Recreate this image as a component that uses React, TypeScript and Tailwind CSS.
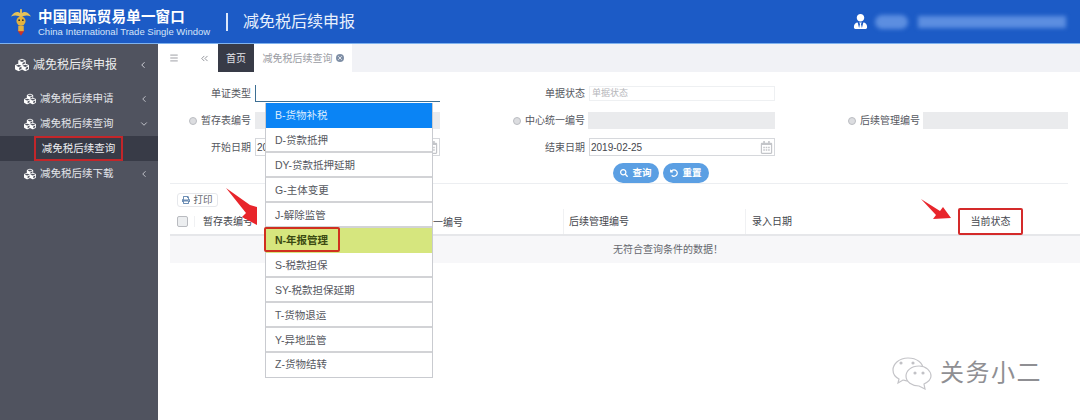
import { FaCubes, FaUserTie, FaSearch, FaPrint, FaRegCalendarAlt, FaUndoAlt } from "react-icons/fa";
import { ChevronDown, ChevronLeft, ChevronsLeft, Menu, X } from "lucide-react";

const font = { fontFamily: '"Liberation Sans", "Noto Sans CJK SC", sans-serif' };

const options = [
  "B-货物补税",
  "D-贷款抵押",
  "DY-贷款抵押延期",
  "G-主体变更",
  "J-解除监管",
  "N-年报管理",
  "S-税款担保",
  "SY-税款担保延期",
  "T-货物退运",
  "Y-异地监管",
  "Z-货物结转",
];

function Logo() {
  return (
    <svg width="22" height="30" viewBox="0 0 24 30" className="shrink-0">
      <path d="M1 9 C5 3 9 3 12 6 C15 3 19 3 23 9 C18 7 15 8 12 10 C9 8 6 7 1 9Z" fill="#e6c25a" />
      <rect x="11" y="1" width="2" height="8" fill="#e6c25a" />
      <circle cx="12" cy="14" r="5" fill="#e3b23f" />
      <path d="M4 18 L12 30 L20 18 L16 24 L8 24Z" fill="#c8322d" />
      <rect x="9" y="19" width="6" height="6" fill="#e3b23f" />
      <circle cx="10" cy="13" r="1" fill="#333" />
      <circle cx="14" cy="13" r="1" fill="#333" />
    </svg>
  );
}

function Header() {
  return (
    <header className="flex h-[44px] items-center border-b border-[#7fb2ee] bg-[#1c5bc6] pl-[10px] text-white">
      <Logo />
      <div className="ml-[6px] w-[175px] whitespace-nowrap pt-[3px]">
        <div className="text-[14.5px] font-bold leading-[17px] tracking-[0.2px]">中国国际贸易单一窗口</div>
        <div className="text-[9.5px] leading-[12px] text-[#d5e3f8]">China International Trade Single Window</div>
      </div>
      <div className="ml-[13px] h-[18px] w-[2px] bg-[#dbe7fa]" />
      <div className="ml-[15px] whitespace-nowrap text-[16px] text-[#e8f0fc]">减免税后续申报</div>
      <FaUserTie className="ml-[498px] shrink-0 text-[15px] text-white" />
      <div className="ml-[7px] flex items-center gap-[10px] blur-[2px]">
        <div className="h-[14px] w-[33px] rounded-full bg-[#5c8ee0]" />
        <div className="h-[12px] w-[148px] bg-[#5c8ee0]" />
      </div>
    </header>
  );
}

function NavItem({ label, open }: { label: string; open?: boolean }) {
  return (
    <div className="flex h-[25px] items-center pl-[24px] pr-[9px] text-[10.5px] text-[#e4e5ea]">
      <FaCubes className="mr-[4px] text-[12px] text-white" />
      <span>{label}</span>
      {open ? (
        <ChevronDown size={10} className="ml-auto text-[#d5d6dc]" />
      ) : (
        <ChevronLeft size={10} className="ml-auto text-[#d5d6dc]" />
      )}
    </div>
  );
}

function Sidebar() {
  return (
    <aside className="h-[376px] w-[158px] shrink-0 bg-[#50535f]">
      <div className="flex h-[42px] items-center pl-[15px] pr-[10px] text-[12px] text-[#eceded]">
        <FaCubes className="mr-[4px] text-[14px] text-white" />
        <span>减免税后续申报</span>
        <ChevronLeft size={10} className="ml-auto text-[#e4e5ea]" />
      </div>
      <NavItem label="减免税后续申请" />
      <NavItem label="减免税后续查询" open />
      <div className="flex h-[25px] items-center bg-[#383b47] pl-[34px]">
        <div className="flex h-[25px] w-[89px] items-center justify-center border-2 border-[#c2262a] text-[10.5px] text-[#eeeff2]">
          减免税后续查询
        </div>
      </div>
      <NavItem label="减免税后续下载" />
    </aside>
  );
}

function TabBar() {
  return (
    <div className="flex h-[28px] items-stretch bg-[#f1f2f6] text-[10px]">
      <div className="flex w-[60px] items-center bg-white pl-[11px] text-[#8b8d94]">
        <Menu size={10} />
        <ChevronsLeft size={11} className="ml-[20px]" />
      </div>
      <div className="flex w-[36px] items-center justify-center bg-[#383b47] text-[#e3e4e8]">首页</div>
      <div className="flex w-[98px] items-center justify-center gap-[3px] bg-white text-[#9a9ca3]">
        减免税后续查询
        <span className="flex h-[8px] w-[8px] items-center justify-center rounded-full bg-[#7f8fa6]">
          <X size={6} className="text-white" strokeWidth={3} />
        </span>
      </div>
    </div>
  );
}

function Label({ text, radio, width }: { text: string; radio?: boolean; width: string }) {
  return (
    <div className={`flex shrink-0 items-center justify-end text-[10px] text-[#555760] ${width}`}>
      {radio && <span className="mr-[4px] h-[8px] w-[8px] rounded-full border border-[#bbbdc2] bg-[#dcdde0]" />}
      {text}
    </div>
  );
}

function Filters() {
  return (
    <section className="mx-[12px] h-[112px] border-b border-[#eceef1] pt-[13px]">
      <div className="flex h-[17px] items-center">
        <Label text="单证类型" width="w-[81px]" />
        <div className="ml-[4px] h-[17px] w-[185px] border-b border-l border-[#3d6f93] bg-white" />
        <Label text="单据状态" width="w-[145px]" />
        <div className="ml-[4px] flex h-[15px] w-[186px] items-center border border-[#eef0f2] pl-[2px] text-[9px] text-[#b5b6ba]">单据状态</div>
      </div>
      <div className="mt-[10px] flex h-[17px] items-center">
        <Label text="暂存表编号" radio width="w-[81px]" />
        <div className="ml-[4px] h-[17px] w-[185px] bg-[#eaebed]" />
        <Label text="中心统一编号" radio width="w-[145px]" />
        <div className="ml-[3px] h-[17px] w-[187px] bg-[#eaebed]" />
        <Label text="后续管理编号" radio width="w-[145px]" />
        <div className="ml-[3px] h-[17px] flex-1 bg-[#eaebed]" />
      </div>
      <div className="mt-[9px] flex h-[18px] items-center">
        <Label text="开始日期" width="w-[81px]" />
        <div className="ml-[4px] flex h-[18px] w-[185px] items-center justify-between border border-[#d6d8dc] px-[1px] text-[10px] text-[#44464d]">
          <span>20</span>
          <FaRegCalendarAlt className="text-[13px] text-[#c3c5c9]" />
        </div>
        <Label text="结束日期" width="w-[145px]" />
        <div className="ml-[4px] flex h-[18px] w-[186px] items-center justify-between border border-[#d6d8dc] px-[1px] text-[10px] text-[#44464d]">
          <span>2019-02-25</span>
          <FaRegCalendarAlt className="text-[13px] text-[#c3c5c9]" />
        </div>
      </div>
      <div className="mt-[7px] flex gap-[4px] pl-[443px]">
        <button className="flex h-[20px] w-[46px] items-center justify-center gap-[4px] rounded-full bg-[#5b9fe3] text-[9.5px] font-bold text-white">
          <FaSearch className="text-[8px]" />查询
        </button>
        <button className="flex h-[20px] w-[46px] items-center justify-center gap-[4px] rounded-full bg-[#5b9fe3] text-[9.5px] font-bold text-white">
          <FaUndoAlt className="text-[8px]" />重置
        </button>
      </div>
    </section>
  );
}

function ResultTable() {
  return (
    <section>
      <div className="flex h-[25px] items-end pb-[2px] pl-[19px]">
        <button className="flex h-[14px] w-[41px] items-center justify-center gap-[3px] rounded-[3px] border border-[#e6e8ec] text-[9.5px] text-[#66686f]">
          <FaPrint className="text-[8px] text-[#6e8fb5]" />打印
        </button>
      </div>
      <div className="ml-[12px] flex h-[27px] items-center border-b-2 border-[#e6e7ea] text-[10px] text-[#44464d]">
        <div className="flex w-[25px] justify-center border-r border-[#f0f1f3]">
          <span className="h-[11px] w-[11px] rounded-[2px] border border-[#b9bbc0] bg-[#eceef0]" />
        </div>
        <div className="w-[368px] pl-[8px]">暂存表编号</div>
        <div className="flex h-full w-[182px] items-center border-l border-[#f0f1f3] pl-[5px]">后续管理编号</div>
        <div className="flex h-full flex-1 items-center border-l border-[#f0f1f3] pl-[6px]">录入日期</div>
      </div>
      <div className="ml-[12px] flex h-[27px] items-center justify-center bg-[#f7f7f9] pl-[86px] text-[10px] text-[#66686f]">
        无符合查询条件的数据！
      </div>
    </section>
  );
}

function Arrows() {
  return (
    <>
      <svg width="34" height="40" viewBox="0 0 34 40" className="absolute left-[224px] top-[187px]">
        <path d="M2 1 L26 18 L33 20 L33 38 L18 30 L22 26Z" fill="#e8252b" />
      </svg>
      <svg width="32" height="26" viewBox="0 0 32 26" className="absolute left-[920px] top-[198px]">
        <path d="M1 1 L20 13 L23 9 L31 20 L13 21 L16 17Z" fill="#e8252b" />
      </svg>
    </>
  );
}

function Watermark() {
  return (
    <div className="absolute left-[892px] top-[356px] flex items-center gap-[6px] text-[#8f8f93]">
      <svg width="42" height="34" viewBox="0 0 42 34" fill="white" stroke="#c4c4c8" strokeWidth="1.2">
        <path d="M16 2 C7 2 1 8 1 14 C1 18 3 21 7 23 L6 27 L11 24 C12 24 14 25 16 25 C26 25 31 19 31 13 C31 7 25 2 16 2Z" />
        <path d="M27 10 C19 10 14 15 14 20 C14 26 20 30 27 30 L33 33 L32 28 C36 26 39 23 39 20 C39 15 34 10 27 10Z" />
        <circle cx="9" cy="7" r="1" fill="#9a9a9e" />
        <circle cx="21" cy="7" r="1" fill="#9a9a9e" />
        <circle cx="23" cy="17" r="1" fill="#9a9a9e" />
        <circle cx="31" cy="17" r="1" fill="#9a9a9e" />
      </svg>
      <span className="text-[24px] leading-none tracking-[1.5px]">关务小二</span>
    </div>
  );
}

export default function App() {
  return (
    <div className="relative h-[420px] w-[1080px] overflow-hidden bg-white" style={font}>
      <Header />
      <div className="flex">
        <Sidebar />
        <main className="min-w-0 flex-1">
          <TabBar />
          <Filters />
          <ResultTable />
        </main>
      </div>

      <ul className="absolute left-[265px] top-[103px] w-[168px] border-x border-b border-[#c9cbd0] bg-white text-[10.5px] text-[#55575e]">
        {options.map((o, i) => (
          <li
            key={o}
            className={[
              "flex items-center pl-[9px]",
              i === options.length - 1 ? "h-[24px]" : "h-[25px]",
              i === 0
                ? "bg-[#0a84f5] text-[#dcecff]"
                : i === 5
                  ? "bg-[#d6e67e] font-bold text-[#3b4a12]"
                  : i === options.length - 1
                    ? ""
                    : "border-b-2 border-[#d2d3d6] pt-[2px]",
            ].join(" ")}
          >
            {o}
          </li>
        ))}
      </ul>
      <div className="absolute left-[264px] top-[227px] h-[25px] w-[76px] rounded-[2px] border-2 border-[#d0301f]" />

      <div className="absolute left-[433px] top-[209px] flex h-[26px] items-center text-[10px] text-[#44464d]">一编号</div>
      <div className="absolute left-[958px] top-[208px] flex h-[27px] w-[65px] items-center justify-center rounded-[2px] border-2 border-[#d42a2a] bg-white text-[10px] text-[#44464d]">
        当前状态
      </div>

      <Arrows />
      <Watermark />
    </div>
  );
}
